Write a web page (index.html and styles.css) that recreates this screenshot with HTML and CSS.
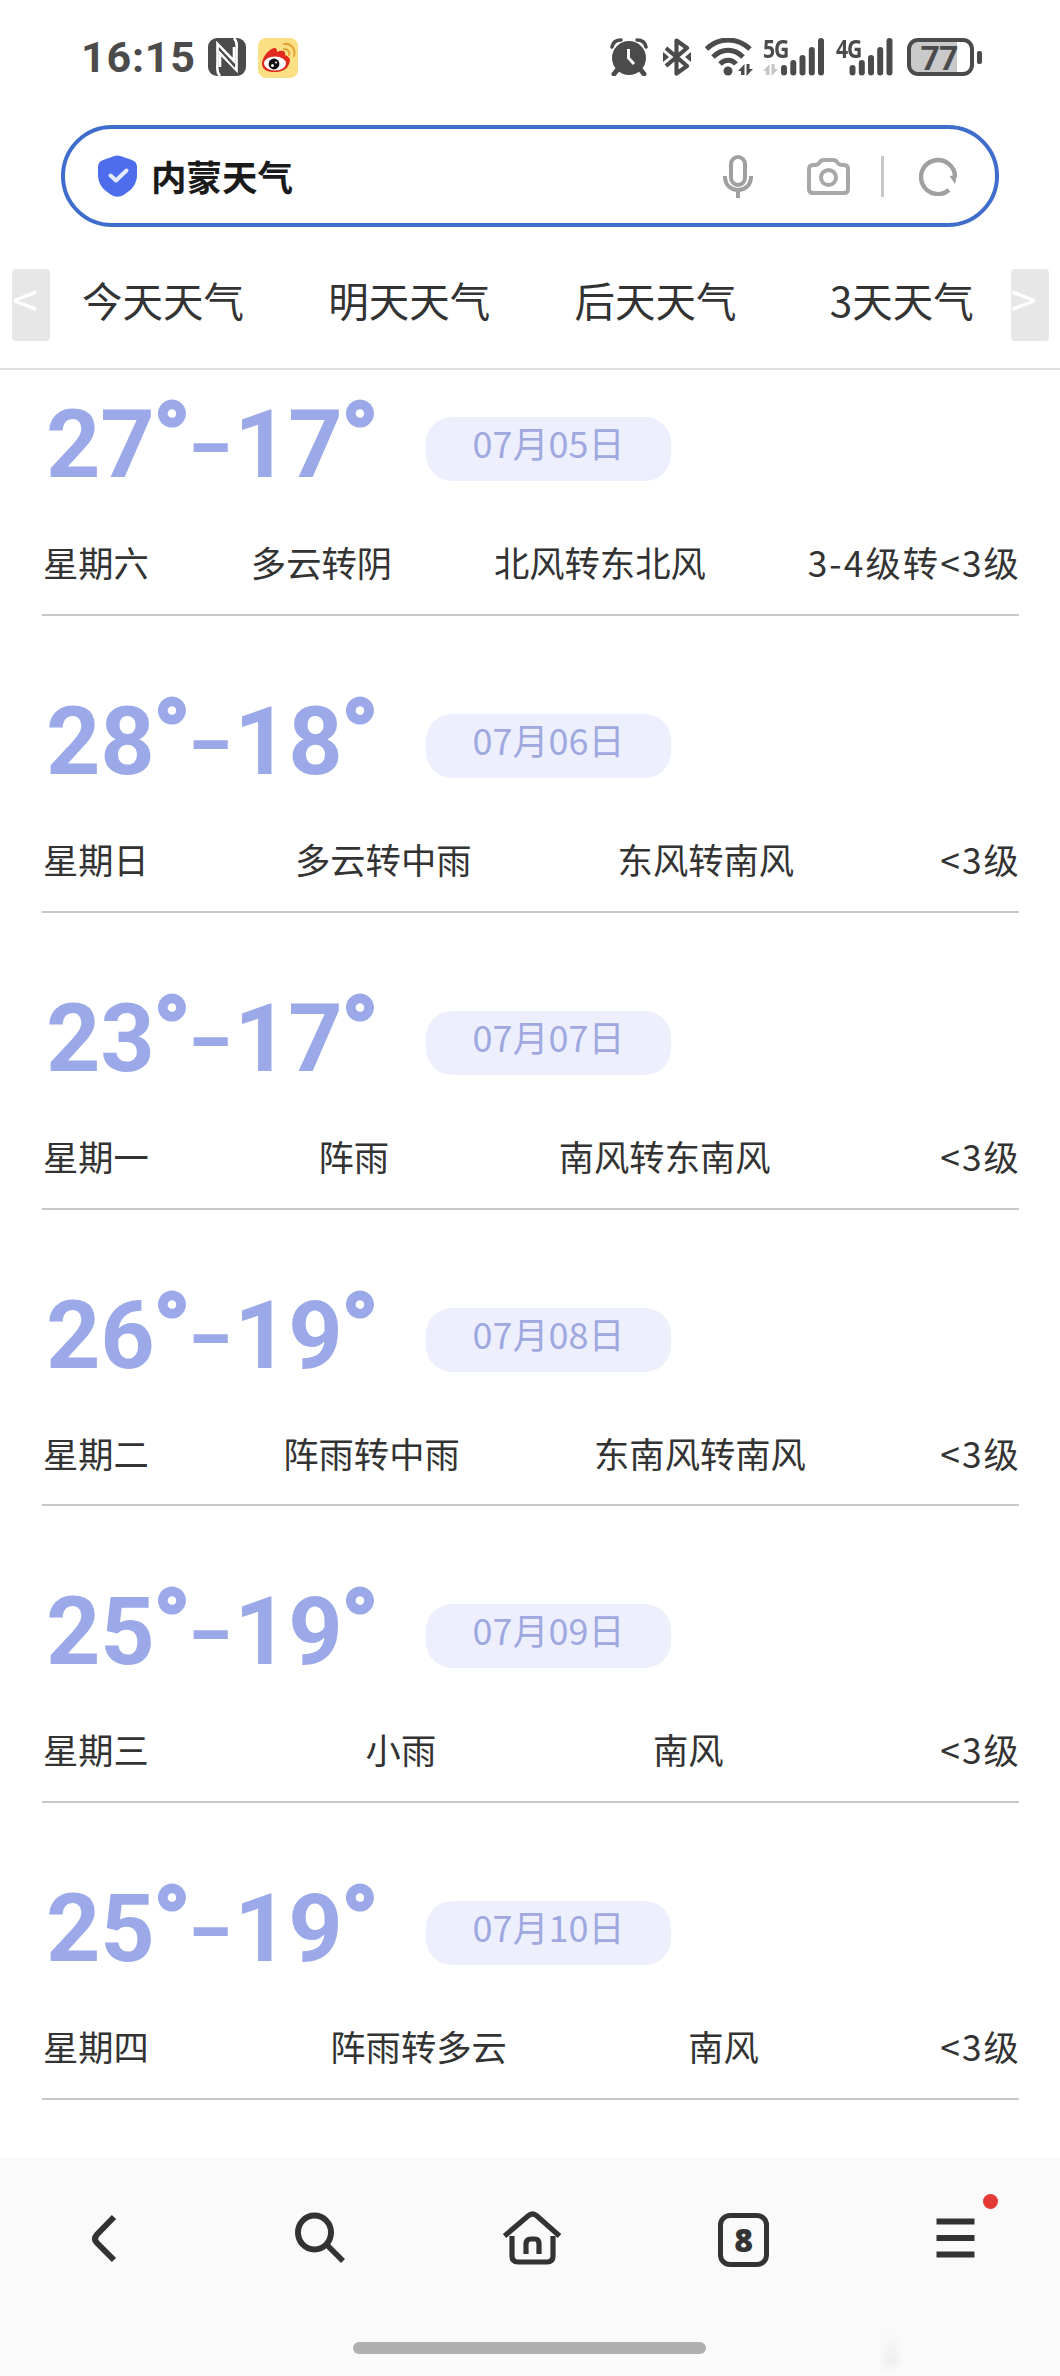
FILE: index.html
```html
<!DOCTYPE html>
<html lang="zh-CN">
<head>
    <meta charset="UTF-8">
    <meta name="viewport" content="width=device-width, initial-scale=1.0">
    <title>内蒙天气</title>
    <link rel="stylesheet" href="styles.css">
</head>
<body>
    <div class="status-bar">
        <span class="clock">16:15</span>
        <svg class="nfc" width="38" height="38" viewBox="0 0 38 38">
            <rect width="38" height="38" rx="9" fill="#4b4b4b"/>
            <path d="M12 38C8 34 9.500 30 9.500 25V6L26 23V9" fill="none" stroke="#fff" stroke-width="2.600"/>
            <path d="M26 0C30 4 28.500 8 28.500 13V32L12 15V29" fill="none" stroke="#fff" stroke-width="2.600"/>
            <path d="M11 9L27 27V30L11 12Z" fill="#4b4b4b"/>
        </svg>
        <svg class="weibo" width="40" height="40" viewBox="0 0 40 40">
            <rect width="40" height="40" rx="8" fill="#fbdf83"/>
            <path d="M4 26C4 19 11 11 16 10C19 10 19 12 19 14C23 12 28 12 27 17C32 19 33 22 31 26C28 34 20 34 15 34C9 34 4 31 4 26Z" fill="#e12a1f"/>
            <ellipse cx="17" cy="25.5" rx="11" ry="7" fill="#fff"/>
            <circle cx="16" cy="26" r="5.4" fill="#111"/>
            <circle cx="14.5" cy="27.5" r="1.5" fill="#fff"/>
            <circle cx="18" cy="24.5" r="1" fill="#fff"/>
            <path d="M26 11C30 11 32 14 31 17M26 6C33 5 38 11 36 18" fill="none" stroke="#e3a53a" stroke-width="2" stroke-linecap="round"/>
        </svg>

        <svg class="alarm" width="38" height="38" viewBox="0 0 38 38">
            <circle cx="19" cy="20" r="17" fill="#4b4b4b"/>
            <path d="M8 31L4 36M30 31L34 36" stroke="#4b4b4b" stroke-width="5" stroke-linecap="round"/>
            <path d="M2 9C3 4 7 2 11 2M27 2C31 2 35 4 36 9" fill="none" stroke="#4b4b4b" stroke-width="3.6" stroke-linecap="round"/>
            <path d="M18.500 11V20L24 26" fill="none" stroke="#fff" stroke-width="3"/>
        </svg>
        <svg class="bluetooth" width="28" height="38" viewBox="0 0 28 38">
            <path d="M3 10L24 28L13.500 35.500V2.500L24 10L3 28" fill="none" stroke="#4b4b4b" stroke-width="4.200" stroke-linejoin="round"/>
            <path d="M0 14L6 19L0 24ZM28 14L22 19L28 24Z" fill="#4b4b4b"/>
        </svg>
        <svg class="wifi" width="48" height="38" viewBox="0 0 48 38">
            <g fill="none" stroke="#4b4b4b" stroke-width="5">
                <path d="M1.500 11C14 -1 32 -1 45 11"/>
                <path d="M8 19C17 10 29 10 38 19"/>
                <path d="M15 26C20 21 27 21 31 26"/>
            </g>
            <circle cx="23" cy="33" r="4.500" fill="#4b4b4b"/>
            <path d="M33 33L39.500 26V37H36V33ZM41.500 26H44.500V31H48L41.500 38Z" fill="#4b4b4b"/>
        </svg>
        <div class="signal signal-5g">
            <span class="net">5G</span>
            <svg width="62" height="38" viewBox="0 0 62 38">
                <path d="M0 33L6.500 26V37H3V33ZM8.500 26H11.500V31H15L8.500 38Z" fill="#c5c5c5"/>
                <path d="M21 30V34.500M30.300 25V34.500M39.500 20V34.500M48.800 12V34.500M58 3V34.500" stroke="#4b4b4b" stroke-width="6" stroke-linecap="round"/>
            </svg>
        </div>
        <div class="signal signal-4g">
            <span class="net">4G</span>
            <svg width="57" height="38" viewBox="0 0 57 38">
                <path d="M16.500 30V34.500M25.800 25V34.500M35 20V34.500M44.200 12V34.500M53.500 3V34.500" stroke="#4b4b4b" stroke-width="6" stroke-linecap="round"/>
            </svg>
        </div>
        <div class="battery"><span>77</span></div>
        <i class="battery-cap"></i>
    </div>

    <div class="search-box">
        <svg class="shield" width="39" height="42" viewBox="0 0 39 42">
            <path d="M16 1.200Q19.500 0 23 1.200L34 5Q39 7 39 12V20C39 31 31 37 23.500 41Q19.500 42.500 15.500 41C8 37 0 31 0 20V12Q0 7 5 5Z" fill="#4d6ded"/>
            <path d="M12.500 20.500L18 25.500L28.500 15.500" fill="none" stroke="#e4ebff" stroke-width="4" stroke-linecap="round" stroke-linejoin="round"/>
        </svg>
        <span class="keyword">内蒙天气</span>
        <svg class="mic" width="30" height="43" viewBox="0 0 30 43">
            <g fill="none" stroke="#a0a0a0" stroke-width="4">
                <rect x="8" y="2" width="14" height="28" rx="7"/>
                <path d="M2 21V22C2 30 8 35 15 35S28 30 28 22V21M15 35V43"/>
            </g>
        </svg>
        <svg class="camera" width="43" height="37" viewBox="0 0 43 37">
            <g fill="none" stroke="#a8a8a8" stroke-width="4">
                <path d="M6 7H8Q11 7 13 4Q14 2 17 2H26Q29 2 30 4Q32 7 35 7H37Q41 7 41 11V31Q41 35 37 35H6Q2 35 2 31V11Q2 7 6 7Z"/>
                <circle cx="21.500" cy="19.500" r="7.500"/>
            </g>
        </svg>
        <i class="separator"></i>
        <svg class="refresh" width="39" height="39" viewBox="0 0 39 39">
            <path d="M30 33A17 17 0 1 1 36 20" fill="none" stroke="#a0a0a0" stroke-width="4.400"/>
            <path d="M30.500 19L38 18L36 27Z" fill="#a0a0a0"/>
        </svg>
    </div>

    <div class="tabs">
        <span class="arrow">&lt;</span>
        <div class="tab">今天天气</div>
        <div class="tab">明天天气</div>
        <div class="tab">后天天气</div>
        <div class="tab">3天天气</div>
        <span class="arrow arrow-next">&gt;</span>
    </div>

    <div class="forecast">
        <div class="day">
            <div class="top">
                <div class="temp">27<sup>°</sup><b>-</b>17<sup>°</sup></div>
                <div class="date">07月05日</div>
            </div>
            <div class="info"><span>星期六</span><span>多云转阴</span><span>北风转东北风</span><span>3-4级转&lt;3级</span></div>
        </div>
        <div class="day">
            <div class="top">
                <div class="temp">28<sup>°</sup><b>-</b>18<sup>°</sup></div>
                <div class="date">07月06日</div>
            </div>
            <div class="info"><span>星期日</span><span>多云转中雨</span><span>东风转南风</span><span>&lt;3级</span></div>
        </div>
        <div class="day">
            <div class="top">
                <div class="temp">23<sup>°</sup><b>-</b>17<sup>°</sup></div>
                <div class="date">07月07日</div>
            </div>
            <div class="info"><span>星期一</span><span>阵雨</span><span>南风转东南风</span><span>&lt;3级</span></div>
        </div>
        <div class="day">
            <div class="top">
                <div class="temp">26<sup>°</sup><b>-</b>19<sup>°</sup></div>
                <div class="date">07月08日</div>
            </div>
            <div class="info"><span>星期二</span><span>阵雨转中雨</span><span>东南风转南风</span><span>&lt;3级</span></div>
        </div>
        <div class="day">
            <div class="top">
                <div class="temp">25<sup>°</sup><b>-</b>19<sup>°</sup></div>
                <div class="date">07月09日</div>
            </div>
            <div class="info"><span>星期三</span><span>小雨</span><span>南风</span><span>&lt;3级</span></div>
        </div>
        <div class="day">
            <div class="top">
                <div class="temp">25<sup>°</sup><b>-</b>19<sup>°</sup></div>
                <div class="date">07月10日</div>
            </div>
            <div class="info"><span>星期四</span><span>阵雨转多云</span><span>南风</span><span>&lt;3级</span></div>
        </div>
    </div>

    <div class="toolbar">
        <div class="buttons">
            <div class="button">
                <svg width="60" height="60" viewBox="0 0 60 60">
                    <path d="M36 10L19 27.500Q15 32 19 36L36 53" fill="none" stroke="#333" stroke-width="6"/>
                </svg>
            </div>
            <div class="button">
                <svg width="60" height="60" viewBox="0 0 60 60">
                    <ellipse cx="24.500" cy="25.500" rx="16.500" ry="17" fill="none" stroke="#333" stroke-width="6"/>
                    <path d="M37 38L53 54" stroke="#333" stroke-width="5.500"/>
                </svg>
            </div>
            <div class="button">
                <svg width="60" height="60" viewBox="0 0 60 60">
                    <g fill="none" stroke="#333" stroke-width="5.200">
                        <path d="M2.500 29L26 9Q30.500 5 35 9L57.500 29"/>
                        <path d="M10 29V49Q10 55 16 55H45Q51 55 51 49V29"/>
                        <path d="M24 47V37Q24 32 29 32H33Q37 32 37 37V47"/>
                    </g>
                </svg>
            </div>
            <div class="button"><span class="count">8</span></div>
            <div class="button">
                <svg width="60" height="60" viewBox="0 0 60 60">
                    <path d="M10.500 14.500H48.500M10.500 31H48.500M10.500 47.500H48.500" stroke="#333" stroke-width="6"/>
                </svg>
                <i class="dot"></i>
            </div>
        </div>
        <i class="home-bar"></i>
        <i class="smudge"></i>
    </div>
</body>
</html>
```

FILE: styles.css
```css
* {
    box-sizing: border-box;
}

body {
    margin: 0;
    width: 1060px;
    height: 2376px;
    display: flex;
    flex-direction: column;
    overflow: hidden;
    background-color: #fff;
    color: #333;
    font-family: "Noto Sans CJK SC", sans-serif;
}

svg {
    display: block;
    flex-shrink: 0;
}

/* status bar */
.status-bar {
    height: 125px;
    padding: 38px 0 0 81px;
    display: flex;
    align-items: flex-start;
    color: #4b4b4b;
}

.clock {
    width: 127px;
    font: bold 43px/39px Roboto, sans-serif;
    letter-spacing: 0.8px;
}

.weibo {
    margin-left: 12px;
}

.alarm {
    margin-left: 312px;
}

.bluetooth {
    margin-left: 15px;
}

.wifi {
    margin-left: 14px;
}

.signal {
    position: relative;
}

.signal-5g {
    margin-left: 10px;
}

.signal-4g {
    margin-left: 11px;
}

.net {
    position: absolute;
    top: 0;
    left: 0;
    font: bold 25px/20px "Open Sans", sans-serif;
    letter-spacing: -1.5px;
    transform: scaleX(0.85);
    transform-origin: left;
}

.battery {
    width: 67px;
    height: 38px;
    margin-left: 14px;
    border: 4px solid #4b4b4b;
    border-radius: 11px;
    background: linear-gradient(to right, #c9c9c9 46px, #fff 46px);
    text-align: center;
    font: bold 34px/32px Roboto, sans-serif;
    letter-spacing: -1px;
}

.battery span {
    margin-left: -3px;
}

.battery-cap {
    width: 5px;
    height: 13px;
    margin: 13px 0 0 3px;
    border-radius: 2px;
    background-color: #4b4b4b;
}

/* search */
.search-box {
    width: 938px;
    height: 102px;
    margin-left: 61px;
    padding-left: 33px;
    display: flex;
    align-items: center;
    border: 4px solid #3f6dcc;
    border-radius: 51px;
}

.keyword {
    width: 572px;
    margin-left: 14px;
    color: #1a1a1a;
    font-size: 35.5px;
    font-weight: bold;
    line-height: 50px;
}

.camera {
    margin-left: 54px;
}

.separator {
    width: 3px;
    height: 41px;
    margin: 0 35px 0 31px;
    background-color: #c8c8c8;
}

/* tabs */
.tabs {
    height: 143px;
    padding: 0 11px 0 12px;
    display: flex;
    align-items: center;
    border-bottom: 2px solid #e0e0e0;
}

.tab {
    width: 246.2px;
    flex-shrink: 0;
    text-align: center;
    font-size: 40.5px;
    line-height: 60px;
    margin-top: 5px;
}

.arrow {
    width: 38px;
    height: 72px;
    margin-right: -10px;
    margin-top: 15px;
    flex-shrink: 0;
    border-radius: 4px;
    background-color: #e7e7e7;
    color: #fff;
    font-size: 46px;
    line-height: 58px;
}

.arrow-next {
    margin-right: 0;
    margin-left: -14px;
}

/* forecast */
.forecast {
    height: 1787px;
    padding: 0 41px 0 42px;
}

.day {
    height: 296.8px;
    border-bottom: 2px solid #c6c6cb;
}

.day:first-child {
    height: 246px;
}

.top {
    height: 163px;
    padding-top: 65px;
    display: flex;
}

.day:first-child .top {
    height: 112px;
    padding-top: 14px;
}

.temp {
    width: 384px;
    height: 97px;
    padding-left: 4px;
    color: #9ca9e9;
    font: bold 95px/122px Roboto, sans-serif;
    letter-spacing: -0.3px;
    white-space: nowrap;
}

.temp sup {
    position: relative;
    top: -8px;
    left: -1px;
    font-size: 95px;
    line-height: 0;
    vertical-align: baseline;
    -webkit-text-stroke: 3px #9ca9e9;
}

.temp b {
    display: inline-block;
    font-family: Inter, sans-serif;
    font-weight: 600;
    font-size: 93px;
    line-height: 0;
    transform: translate(-2px, -1px) scale(1.12, 0.9);
}

.date {
    width: 245px;
    height: 64px;
    margin-top: 33px;
    border-radius: 26px;
    background-color: #eeeffd;
    color: #9fa9df;
    text-align: center;
    font-size: 36px;
    line-height: 51px;
}

.info {
    display: flex;
    justify-content: space-between;
    font-size: 35.3px;
    line-height: 52px;
    padding: 54px 0 0 1px;
}

.info span:last-child {
    margin-right: -2px;
    letter-spacing: 2.1px;
}

/* bottom toolbar */
.toolbar {
    position: relative;
    height: 219px;
    background-color: #fafafa;
}

.buttons {
    padding: 50px 0 0 78px;
    display: flex;
    gap: 152px;
}

.button {
    position: relative;
    width: 60px;
    height: 60px;
}

.count {
    display: block;
    width: 51px;
    height: 54px;
    margin: 6px 0 0 4px;
    border: 5px solid #333;
    border-radius: 12px;
    text-align: center;
    font: 800 32px/44px "Open Sans", sans-serif;
}

.dot {
    position: absolute;
    top: -13px;
    right: -12px;
    width: 15px;
    height: 15px;
    border-radius: 50%;
    background-color: #e53935;
}

.home-bar {
    display: block;
    width: 353px;
    height: 12px;
    margin: 75px 0 0 353px;
    border-radius: 6px;
    background-color: #b0b0b0;
}

.smudge {
    position: absolute;
    left: 884px;
    bottom: 10px;
    width: 14px;
    height: 34px;
    background: linear-gradient(#fafafa, #ececec);
    filter: blur(3px);
}
```
